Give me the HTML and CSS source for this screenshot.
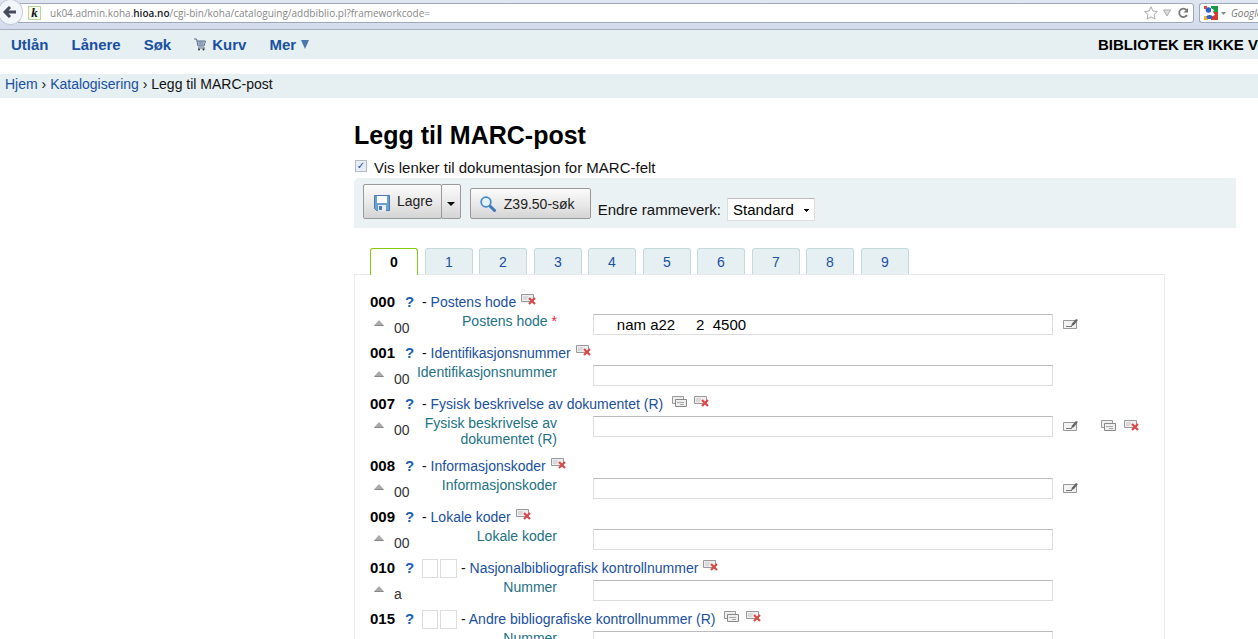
FILE: index.html
```html
<!DOCTYPE html>
<html lang="no">
<head>
<meta charset="utf-8">
<title>Legg til MARC-post</title>
<link rel="stylesheet" href="styles.css">
</head>
<body>
<svg class="symbols" aria-hidden="true">
  <symbol id="delete" viewBox="0 0 16 12">
    <path d="M.5.5h12v7H.5z" fill="#eee" stroke="#999"/>
    <path d="M2 3h5M2 5h4" stroke="#c4c4c4"/>
    <path d="M8 4l6 6M14 4l-6 6" stroke="#d94a4a" stroke-width="2.200"/>
  </symbol>
  <symbol id="clone" viewBox="0 0 16 12">
    <path d="M.5.5h11v7H.5z" fill="#eee" stroke="#999"/>
    <path d="M3.500 3.500h11v7h-11z" fill="#eee" stroke="#888"/>
    <path d="M5 6.500h7M8 8.500h4" stroke="#aaa"/>
  </symbol>
  <symbol id="edit" viewBox="0 0 16 12">
    <path d="M.5 2.500h13v8H.5z" fill="#f2f2f2" stroke="#999"/>
    <path d="M3 8.500h6" stroke="#777"/>
    <path d="M8 8.500l1-3L13 1l2 1-4 5z" fill="#666"/>
  </symbol>
  <symbol id="up" viewBox="0 0 10 7">
    <path d="M5 0l4.500 5v1h-9V5z" fill="#aaa"/><path d="M.5 5.500h9" stroke="#888"/>
  </symbol>
</svg>

<div class="browser">
  <button class="back" aria-label="Tilbake"><svg viewBox="0 0 14 12"><path d="M7 1L2 6l5 5M2 6h11" fill="none" stroke="#454d5c" stroke-width="3"/></svg></button>
  <div class="address">
    <span class="favicon">k</span>
    <span class="url">uk04.admin.koha.<b>hioa.no</b>/cgi-bin/koha/cataloguing/addbiblio.pl?frameworkcode=</span>
    <svg class="star" viewBox="0 0 14 14"><path d="M7 .8l1.900 4.200 4.500.500-3.400 3 1 4.600L7 10.800l-4 2.300 1-4.600-3.400-3L5.100 5z" fill="#fff" stroke="#aaa"/></svg>
    <svg class="drop" viewBox="0 0 8 8"><path d="M.5 1h7L4 7z" fill="#ddd" stroke="#aaa"/></svg>
    <svg class="reload" viewBox="0 0 12 12"><path d="M9.500 3A4.200 4.200 0 1 0 10 8" fill="none" stroke="#777" stroke-width="1.800"/><path d="M6.500 5.500h4.500V1z" fill="#777"/></svg>
  </div>
  <div class="search">
    <svg class="google" viewBox="0 0 14 14"><path d="M0 0h7v14H0z" fill="#fff"/><path d="M7 0h7v6H7z" fill="#179a43"/><path d="M9 6h5v8H7V9z" fill="#dc3a2b"/><path d="M0 0h3v3H0z" fill="#e8473a"/><path d="M0 10h4v4H0z" fill="#f4b32b"/><circle cx="4.500" cy="4" r="2.800" fill="#2c62d0"/><path d="M7 2l3 2-1 2 2 3-4 2z" fill="#fff"/><ellipse cx="5.500" cy="11" rx="3" ry="2" fill="#2c62d0"/></svg>
    <svg class="tiny" viewBox="0 0 5 3"><path d="M0 0h5L2.500 3z" fill="#888"/></svg>
    <i>Google</i>
  </div>
</div>

<header class="top">
  <nav>
    <a href="#">Utlån</a><a href="#">Lånere</a><a href="#">Søk</a>
    <a href="#" class="cart"><svg viewBox="0 0 12 13"><path d="M0 1h2.500l1.500 7h6l1.500-5H3M4 10h7" fill="none" stroke="#536b88"/><path d="M4 4h6.500M4 6h6M6 3v5M8 3v5" stroke="#6e87a3"/><circle cx="5" cy="11.500" r="1" fill="#333"/><circle cx="9.500" cy="11.500" r="1" fill="#333"/></svg>Kurv</a>
    <a href="#" class="more">Mer<svg viewBox="0 0 8 9"><path d="M0 0h8L4 9z" fill="#4878ae"/></svg></a>
  </nav>
  <strong>BIBLIOTEK ER IKKE V</strong>
</header>

<div class="crumbs"><a href="#">Hjem</a> › <a href="#">Katalogisering</a> › Legg til MARC-post</div>

<main>
  <h1>Legg til MARC-post</h1>
  <label class="docs"><input type="checkbox" checked>Vis lenker til dokumentasjon for MARC-felt</label>

  <div class="toolbar">
    <div class="split">
      <button><svg class="disk" viewBox="0 0 16 16"><path d="M.5.5h15v15h-13l-2-2z" fill="#6d9fd0" stroke="#4a7bb0"/><path d="M3 1h10v7H3z" fill="#fff"/><path d="M4 10h8v6H4z" fill="#e6edf4"/><path d="M5 11h3v4H5z" fill="#4a7bb0"/></svg>Lagre</button>
      <button class="arrow" aria-label="Flere valg"><svg viewBox="0 0 8 4"><path d="M0 0h8L4 4z"/></svg></button>
    </div>
    <button class="z"><svg class="lens" viewBox="0 0 16 16"><path d="M9.500 9.500l5 5" stroke="#3b78bd" stroke-width="3" stroke-linecap="round"/><circle cx="6" cy="6" r="4.800" fill="#e5f3fc" stroke="#4a8acb" stroke-width="1.800"/></svg>Z39.50-søk</button>
    <label class="framework" for="fw">Endre rammeverk:</label>
    <div class="select"><select id="fw"><option>Standard</option></select></div>
  </div>

  <div class="tabs">
    <button class="on">0</button><button>1</button><button>2</button><button>3</button><button>4</button><button>5</button><button>6</button><button>7</button><button>8</button><button>9</button>
  </div>

  <section class="panel">
    <div class="field">
      <div class="head"><b>000</b><a href="#" class="q">?</a><span>- <a href="#">Postens hode</a></span><svg class="ic"><use href="#delete"/></svg></div>
      <div class="sub"><svg class="up"><use href="#up"/></svg><span class="code">00</span><label for="f000">Postens hode <em>*</em></label><input id="f000" value="     nam a22     2  4500"><div class="actions"><svg class="ic"><use href="#edit"/></svg></div></div>
    </div>
    <div class="field">
      <div class="head"><b>001</b><a href="#" class="q">?</a><span>- <a href="#">Identifikasjonsnummer</a></span><svg class="ic"><use href="#delete"/></svg></div>
      <div class="sub"><svg class="up"><use href="#up"/></svg><span class="code">00</span><label for="f001">Identifikasjonsnummer</label><input id="f001"><div class="actions"></div></div>
    </div>
    <div class="field">
      <div class="head rep"><b>007</b><a href="#" class="q">?</a><span>- <a href="#">Fysisk beskrivelse av dokumentet (R)</a></span><svg class="ic"><use href="#clone"/></svg><svg class="ic"><use href="#delete"/></svg></div>
      <div class="sub"><svg class="up"><use href="#up"/></svg><span class="code">00</span><label for="f007">Fysisk beskrivelse av dokumentet (R)</label><input id="f007"><div class="actions"><svg class="ic"><use href="#edit"/></svg><svg class="ic second"><use href="#clone"/></svg><svg class="ic"><use href="#delete"/></svg></div></div>
    </div>
    <div class="field">
      <div class="head"><b>008</b><a href="#" class="q">?</a><span>- <a href="#">Informasjonskoder</a></span><svg class="ic"><use href="#delete"/></svg></div>
      <div class="sub"><svg class="up"><use href="#up"/></svg><span class="code">00</span><label for="f008">Informasjonskoder</label><input id="f008"><div class="actions"><svg class="ic"><use href="#edit"/></svg></div></div>
    </div>
    <div class="field">
      <div class="head"><b>009</b><a href="#" class="q">?</a><span>- <a href="#">Lokale koder</a></span><svg class="ic"><use href="#delete"/></svg></div>
      <div class="sub"><svg class="up"><use href="#up"/></svg><span class="code">00</span><label for="f009">Lokale koder</label><input id="f009"><div class="actions"></div></div>
    </div>
    <div class="field">
      <div class="head"><b>010</b><a href="#" class="q">?</a><input class="ind" aria-label="Indikator 1"><input class="ind" aria-label="Indikator 2"><span>- <a href="#">Nasjonalbibliografisk kontrollnummer</a></span><svg class="ic"><use href="#delete"/></svg></div>
      <div class="sub"><svg class="up"><use href="#up"/></svg><span class="code">a</span><label for="f010">Nummer</label><input id="f010"><div class="actions"></div></div>
    </div>
    <div class="field">
      <div class="head rep"><b>015</b><a href="#" class="q">?</a><input class="ind" aria-label="Indikator 1"><input class="ind" aria-label="Indikator 2"><span>- <a href="#">Andre bibliografiske kontrollnummer (R)</a></span><svg class="ic"><use href="#clone"/></svg><svg class="ic"><use href="#delete"/></svg></div>
      <div class="sub"><label class="first" for="f015">Nummer</label><input id="f015"><div class="actions"></div></div>
    </div>
  </section>
</main>
</body>
</html>
```
FILE: styles.css
```css
* { box-sizing: border-box; }
body {
  margin: 0;
  height: 100vh;
  overflow: hidden;
  background: #fff;
  color: #111;
  font: 14px/20px "Liberation Sans", Arial, sans-serif;
}
a { color: #1a50a0; text-decoration: none; }
svg { flex: none; }
button, input, select { font: inherit; color: inherit; }
.symbols { position: absolute; width: 0; height: 0; }

.browser {
  display: flex;
  height: 30px;
  padding: 3px 0 6px;
  background: linear-gradient(#dfe6f2, #d3dcec);
  border-bottom: 1px solid #a5aebd;
}
.back {
  position: relative;
  flex: none;
  width: 25px;
  height: 26px;
  margin: -4px -6px 0 -2px;
  padding: 0 0 0 4px;
  display: flex;
  align-items: center;
  border: 1px solid #c4cbd8;
  border-radius: 50%;
  background: #f2f5fa;
}
.back svg { width: 14px; height: 12px; }
.address, .search {
  display: flex;
  align-items: center;
  height: 20px;
  border: 1px solid #9fa8b8;
  background: #fff;
}
.address { flex: 1; padding: 0 4px 0 10px; border-radius: 0 3px 3px 0; }
.favicon {
  width: 13px;
  height: 14px;
  border: 1px solid #b9d69a;
  background: #f6faee;
  color: #111;
  text-align: center;
  font: italic bold 13px/11px "Liberation Serif", serif;
}
.url { flex: 1; margin-left: 9px; color: #888; font: 10px/18px "Open Sans", sans-serif; white-space: nowrap; }
.url b { color: #222; font-weight: 600; }
.star { width: 14px; height: 14px; }
.drop { width: 8px; height: 8px; margin: 0 6px 0 5px; }
.reload { width: 12px; height: 12px; }
.search { flex: 0 0 59px; margin-left: 5px; padding-left: 4px; overflow: hidden; border-right: 0; border-radius: 3px 0 0 3px; color: #777; font: 10px/18px "Open Sans", sans-serif; }
.google { width: 14px; height: 14px; }
.tiny { width: 5px; height: 3px; margin: 0 5px 0 3px; }

.top { display: flex; justify-content: space-between; height: 29px; background: #e6eff2; line-height: 30px; overflow: hidden; }
.top nav { display: flex; gap: 23px; padding-left: 11px; font-weight: bold; font-size: 15px; }
.cart, .more { display: flex; align-items: center; }
.cart svg { width: 12px; height: 13px; margin-right: 6px; }
.more svg { width: 8px; height: 9px; margin-left: 5px; }
.top strong { flex: 0 0 159px; white-space: nowrap; font-size: 15px; color: #000; }
.crumbs { margin-top: 15px; padding: 0 5px; height: 24px; background: #e6eff2; line-height: 21px; }

main { margin: 23px 22px 0 354px; }
h1 { margin: 0; font-size: 25px; line-height: 28px; color: #000; }
.docs { display: flex; align-items: center; margin-top: 9px; height: 20px; font-size: 15px; }
.docs input {
  appearance: none;
  width: 12px;
  height: 12px;
  margin: 0 7px 4px 1px;
  border: 1px solid #b5bcc6;
  background: #e7edf5;
  display: grid;
  place-items: center;
}
.docs input:checked::before { content: "✓"; color: #2c4a8c; font: bold 10px/10px "DejaVu Sans", sans-serif; }

.toolbar { display: flex; height: 50px; padding: 6px 8px; background: #ebf2f4; border-radius: 5px 0 0 0; font-size: 15px; }
.toolbar button {
  display: flex;
  align-items: center;
  padding: 0;
  color: #222;
  font-size: 14px;
  border: 1px solid #999;
  border-radius: 2px;
  background: linear-gradient(#fbfbfb, #e6e6e6 60%, #d4d4d4);
}
.split { display: flex; height: 35px; margin-left: 1px; }
.split button { padding: 0 8px 2px 10px; }
.toolbar .arrow { margin-left: -1px; width: 20px; padding: 4px 0 0 5px; }
.arrow svg { width: 8px; height: 4px; }
.disk { width: 16px; height: 16px; margin: 4px 7px 0 0; }
.toolbar .z { height: 31px; margin: 4px 0 0 9px; padding: 0 15px 0 9px; }
.lens { width: 16px; height: 16px; margin-right: 8px; }
.framework { margin: 16px 6px 0 7px; }
.select { margin-top: 14px; height: 23px; display: flex; background: #fff; border: 1px solid #ddd; border-top-color: #bbb; }
.select select { appearance: none; width: 86px; border: 0; padding: 0 5px; color: #000; background: linear-gradient(#000, #000) 76px 10px / 5px 1px no-repeat, linear-gradient(#000, #000) 77px 11px / 3px 1px no-repeat, linear-gradient(#000, #000) 78px 12px / 1px 1px no-repeat; }

.tabs { display: flex; gap: 7px; margin-top: 20px; padding-left: 16px; }
.tabs button { width: 48px; margin-right: -1px; height: 26px; padding: 0; border: 1px solid #c5dadd; border-bottom: 0; border-radius: 3px 3px 0 0; background: #e6eff2; color: #1a50a0; }
.tabs button:nth-child(odd) { margin-right: 0; }
.tabs .on { position: relative; height: 27px; margin-bottom: -1px; background: #fff; border-color: #85ca11; color: #000; font-weight: bold; }

.panel { margin-right: 71px; padding: 17px 15px; border: 1px solid #e9eaea; }
.field { min-height: 51px; }
.head { display: flex; align-items: center; height: 20px; white-space: nowrap; }
.head b { width: 35px; font-size: 15px; color: #000; }
.head .q { width: 17px; font-weight: bold; font-size: 15px; color: #1a5fb4; }
.ic { width: 16px; height: 12px; }
.head .ic { margin: 0 0 4px 5px; }
.rep .ic { margin-left: 9px; }
.rep .ic + .ic { margin-left: 6px; }
.head .ind { flex: none; width: 16px; height: 19px; margin-right: 2px; border-color: #ddd; }
.head .ind + .ind { margin-right: 4px; width: 17px; }
.sub { display: flex; align-items: flex-start; }
.up { width: 10px; height: 7px; margin: 8px 10px 0 4px; }
.code { width: 22px; margin-top: 6px; color: #333; }
.sub label { width: 141px; margin: 1px 36px 9px 0; text-align: right; line-height: 16px; color: #227284; white-space: nowrap; }
.sub label[for="f007"] { white-space: normal; }
.sub .first { margin-left: 46px; }
em { color: #e23; font-style: normal; }
input { border: 1px solid #ddd; border-top-color: #bbb; background: #fff; padding: 0; }
.sub input { flex: 1; height: 21px; margin-top: 2px; padding-left: 2px; color: #000; font-size: 15px; }
.actions { display: flex; width: 96px; padding: 6px 0 0 10px; }
.actions .second { margin: 0 7px 0 22px; }
```
